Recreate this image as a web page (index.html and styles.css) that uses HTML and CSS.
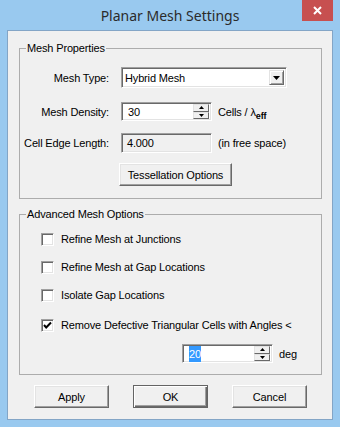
FILE: index.html
```html
<!DOCTYPE html>
<html lang="en">
  <head>
    <meta charset="utf-8" />
    <title>Planar Mesh Settings</title>
    <link rel="stylesheet" href="styles.css">
  </head>
  <body>
    <div class="window">
      <div class="titlebar">
        <span class="title">Planar Mesh Settings</span>
        <span class="close">
          <svg width="9" height="9" viewBox="0 0 9 9"><path d="M1 1 L8 8 M8 1 L1 8" stroke="#fff" stroke-width="2" /></svg>
        </span>
      </div>

      <div class="client">
        <fieldset class="group group-props">
          <legend>Mesh Properties</legend>

          <div class="row row-type">
            <span class="lbl">Mesh Type:</span>
            <div class="field combo">
              <span class="combo-text">Hybrid Mesh</span>
              <span class="combo-btn">
                <svg width="7" height="4" viewBox="0 0 7 4"><path d="M0 0 H7 L3.5 4 Z" fill="#000" /></svg>
              </span>
            </div>
          </div>

          <div class="row row-density">
            <span class="lbl">Mesh Density:</span>
            <div class="field spin">
              <span class="spin-text">30</span>
              <span class="spin-btns">
                <span class="spin-btn"><svg width="5" height="3" viewBox="0 0 5 3"><path d="M2.5 0 L5 3 H0 Z" fill="#000" /></svg></span>
                <span class="spin-btn"><svg width="5" height="3" viewBox="0 0 5 3"><path d="M0 0 H5 L2.5 3 Z" fill="#000" /></svg></span>
              </span>
            </div>
            <span class="unit">Cells / λ<sub>eff</sub></span>
          </div>

          <div class="row row-edge">
            <span class="lbl">Cell Edge Length:</span>
            <div class="field readonly">4.000</div>
            <span class="unit">(in free space)</span>
          </div>

          <div class="row row-tess">
            <span class="btn btn-tess">Tessellation Options</span>
          </div>
        </fieldset>

        <fieldset class="group group-adv">
          <legend>Advanced Mesh Options</legend>

          <div class="check-row first">
            <span class="box"></span>
            <span>Refine Mesh at Junctions</span>
          </div>
          <div class="check-row">
            <span class="box"></span>
            <span>Refine Mesh at Gap Locations</span>
          </div>
          <div class="check-row">
            <span class="box"></span>
            <span>Isolate Gap Locations</span>
          </div>
          <div class="check-row last">
            <span class="box">
              <svg width="9" height="9" viewBox="0 0 9 9"><path d="M1 4 L3.2 6.5 L8 1.5" stroke="#000" stroke-width="2" fill="none" /></svg>
            </span>
            <span>Remove Defective Triangular Cells with Angles &lt;</span>
          </div>

          <div class="row row-angle">
            <div class="field spin">
              <span class="spin-text"><span class="sel">20</span></span>
              <span class="spin-btns">
                <span class="spin-btn"><svg width="5" height="3" viewBox="0 0 5 3"><path d="M2.5 0 L5 3 H0 Z" fill="#000" /></svg></span>
                <span class="spin-btn"><svg width="5" height="3" viewBox="0 0 5 3"><path d="M0 0 H5 L2.5 3 Z" fill="#000" /></svg></span>
              </span>
            </div>
            <span class="unit">deg</span>
          </div>
        </fieldset>

        <div class="buttons">
          <span class="btn">Apply</span>
          <span class="btn btn-default">OK</span>
          <span class="btn">Cancel</span>
        </div>
      </div>
    </div>
  </body>
</html>
```

FILE: styles.css
```css
body {
  margin: 0;
  font-family: "Liberation Sans", Arial, sans-serif;
  font-size: 11px;
  letter-spacing: -0.15px;
  color: #000;
}
.window {
  width: 340px;
  height: 427px;
  box-sizing: border-box;
  background: #99c9ef;
  padding: 0 7px 7px 7px;
  display: flex;
  flex-direction: column;
}
.titlebar {
  position: relative;
  height: 30px;
  display: flex;
  justify-content: center;
  align-items: center;
}
.title {
  font-family: "Noto Sans", "Open Sans", sans-serif;
  font-size: 14px;
  letter-spacing: 0;
  color: #2b2b2b;
}
.close {
  position: absolute;
  top: 0;
  right: 0;
  width: 31px;
  height: 21px;
  background: #c75050;
  display: flex;
  justify-content: center;
  align-items: center;
}
.client {
  flex: 1;
  background: #f0f0f0;
  border: 1px solid #83a5c6;
}

/* group boxes */
.group {
  margin: 0 10px 0 11px;
  padding: 0;
  border: 1px solid #acacac;
}
.group legend {
  margin-left: 6px;
  padding: 0 1px;
  line-height: 13px;
}
.group-props {
  margin-top: 11px;
  padding-bottom: 12px;
}
.group-adv {
  margin-top: 9px;
  padding-bottom: 11px;
}

/* form rows */
.row {
  display: flex;
  align-items: center;
}
.lbl {
  width: 89px;
  margin-right: 12px;
  text-align: right;
  white-space: nowrap;
}
.row-type {
  margin-top: 12px;
  height: 21px;
}
.row-density {
  margin-top: 14px;
  height: 19px;
}
.row-edge {
  margin-top: 12px;
  height: 20px;
}
.row-tess {
  margin-top: 10px;
}
.row-angle {
  margin-top: 11px;
  margin-left: 162px;
  height: 19px;
}
.unit {
  margin-left: 6px;
  white-space: nowrap;
}
.unit sub {
  font-size: 9px;
  font-weight: bold;
  vertical-align: -3px;
  line-height: 0;
}

/* sunken fields */
.field {
  box-sizing: border-box;
  background: #fff;
  border: 1px solid;
  border-color: #a0a0a0 #fff #fff #a0a0a0;
  box-shadow: inset 1px 1px 0 #696969, inset -1px -1px 0 #e3e3e3;
  display: flex;
  align-items: center;
}
.combo {
  width: 166px;
  height: 21px;
  padding: 2px;
}
.combo-text {
  flex: 1;
  padding-left: 1px;
}
.combo-btn {
  width: 15px;
  height: 15px;
  box-sizing: border-box;
  background: #f0f0f0;
  border: 1px solid;
  border-color: #e3e3e3 #696969 #696969 #e3e3e3;
  box-shadow: inset 1px 1px 0 #fff, inset -1px -1px 0 #a0a0a0;
  display: flex;
  justify-content: center;
  align-items: center;
}
.spin {
  width: 91px;
  height: 19px;
  padding: 2px;
}
.spin-text {
  flex: 1;
  padding-left: 4px;
}
.sel {
  background: #3399ff;
  color: #fff;
  padding: 2px 0;
}
.spin-btns {
  display: flex;
  flex-direction: column;
  width: 16px;
  height: 15px;
}
.spin-btn {
  flex: 1;
  box-sizing: border-box;
  background: #f0f0f0;
  border: 1px solid;
  border-color: #e3e3e3 #696969 #696969 #e3e3e3;
  display: flex;
  justify-content: center;
  align-items: center;
}
.readonly {
  width: 91px;
  height: 20px;
  background: #f0f0f0;
  padding-left: 5px;
}

/* check boxes */
.check-row {
  display: flex;
  align-items: center;
  height: 16px;
  margin-top: 12px;
  margin-left: 21px;
}
.check-row.first {
  margin-top: 10px;
}
.check-row.last {
  margin-top: 14px;
}
.box {
  width: 13px;
  height: 13px;
  box-sizing: border-box;
  margin-right: 7px;
  background: #fff;
  border: 1px solid;
  border-color: #a0a0a0 #fff #fff #a0a0a0;
  box-shadow: inset 1px 1px 0 #696969, inset -1px -1px 0 #e3e3e3;
  display: flex;
  justify-content: center;
  align-items: center;
}

/* push buttons */
.btn {
  box-sizing: border-box;
  width: 75px;
  height: 23px;
  background: #f0f0f0;
  border: 1px solid;
  border-color: #fff #696969 #696969 #fff;
  box-shadow: inset -1px -1px 0 #a0a0a0, inset 1px 1px 0 #e3e3e3;
  display: flex;
  justify-content: center;
  align-items: center;
}
.btn-tess {
  width: 113px;
  margin-left: 99px;
}
.btn-default {
  border: 1px solid #646464;
  box-shadow: inset 1px 1px 0 #fff, inset -1px -1px 0 #696969, inset -2px -2px 0 #a0a0a0;
}
.buttons {
  display: flex;
  gap: 24px;
  margin-top: 10px;
  padding-left: 26px;
}
```
